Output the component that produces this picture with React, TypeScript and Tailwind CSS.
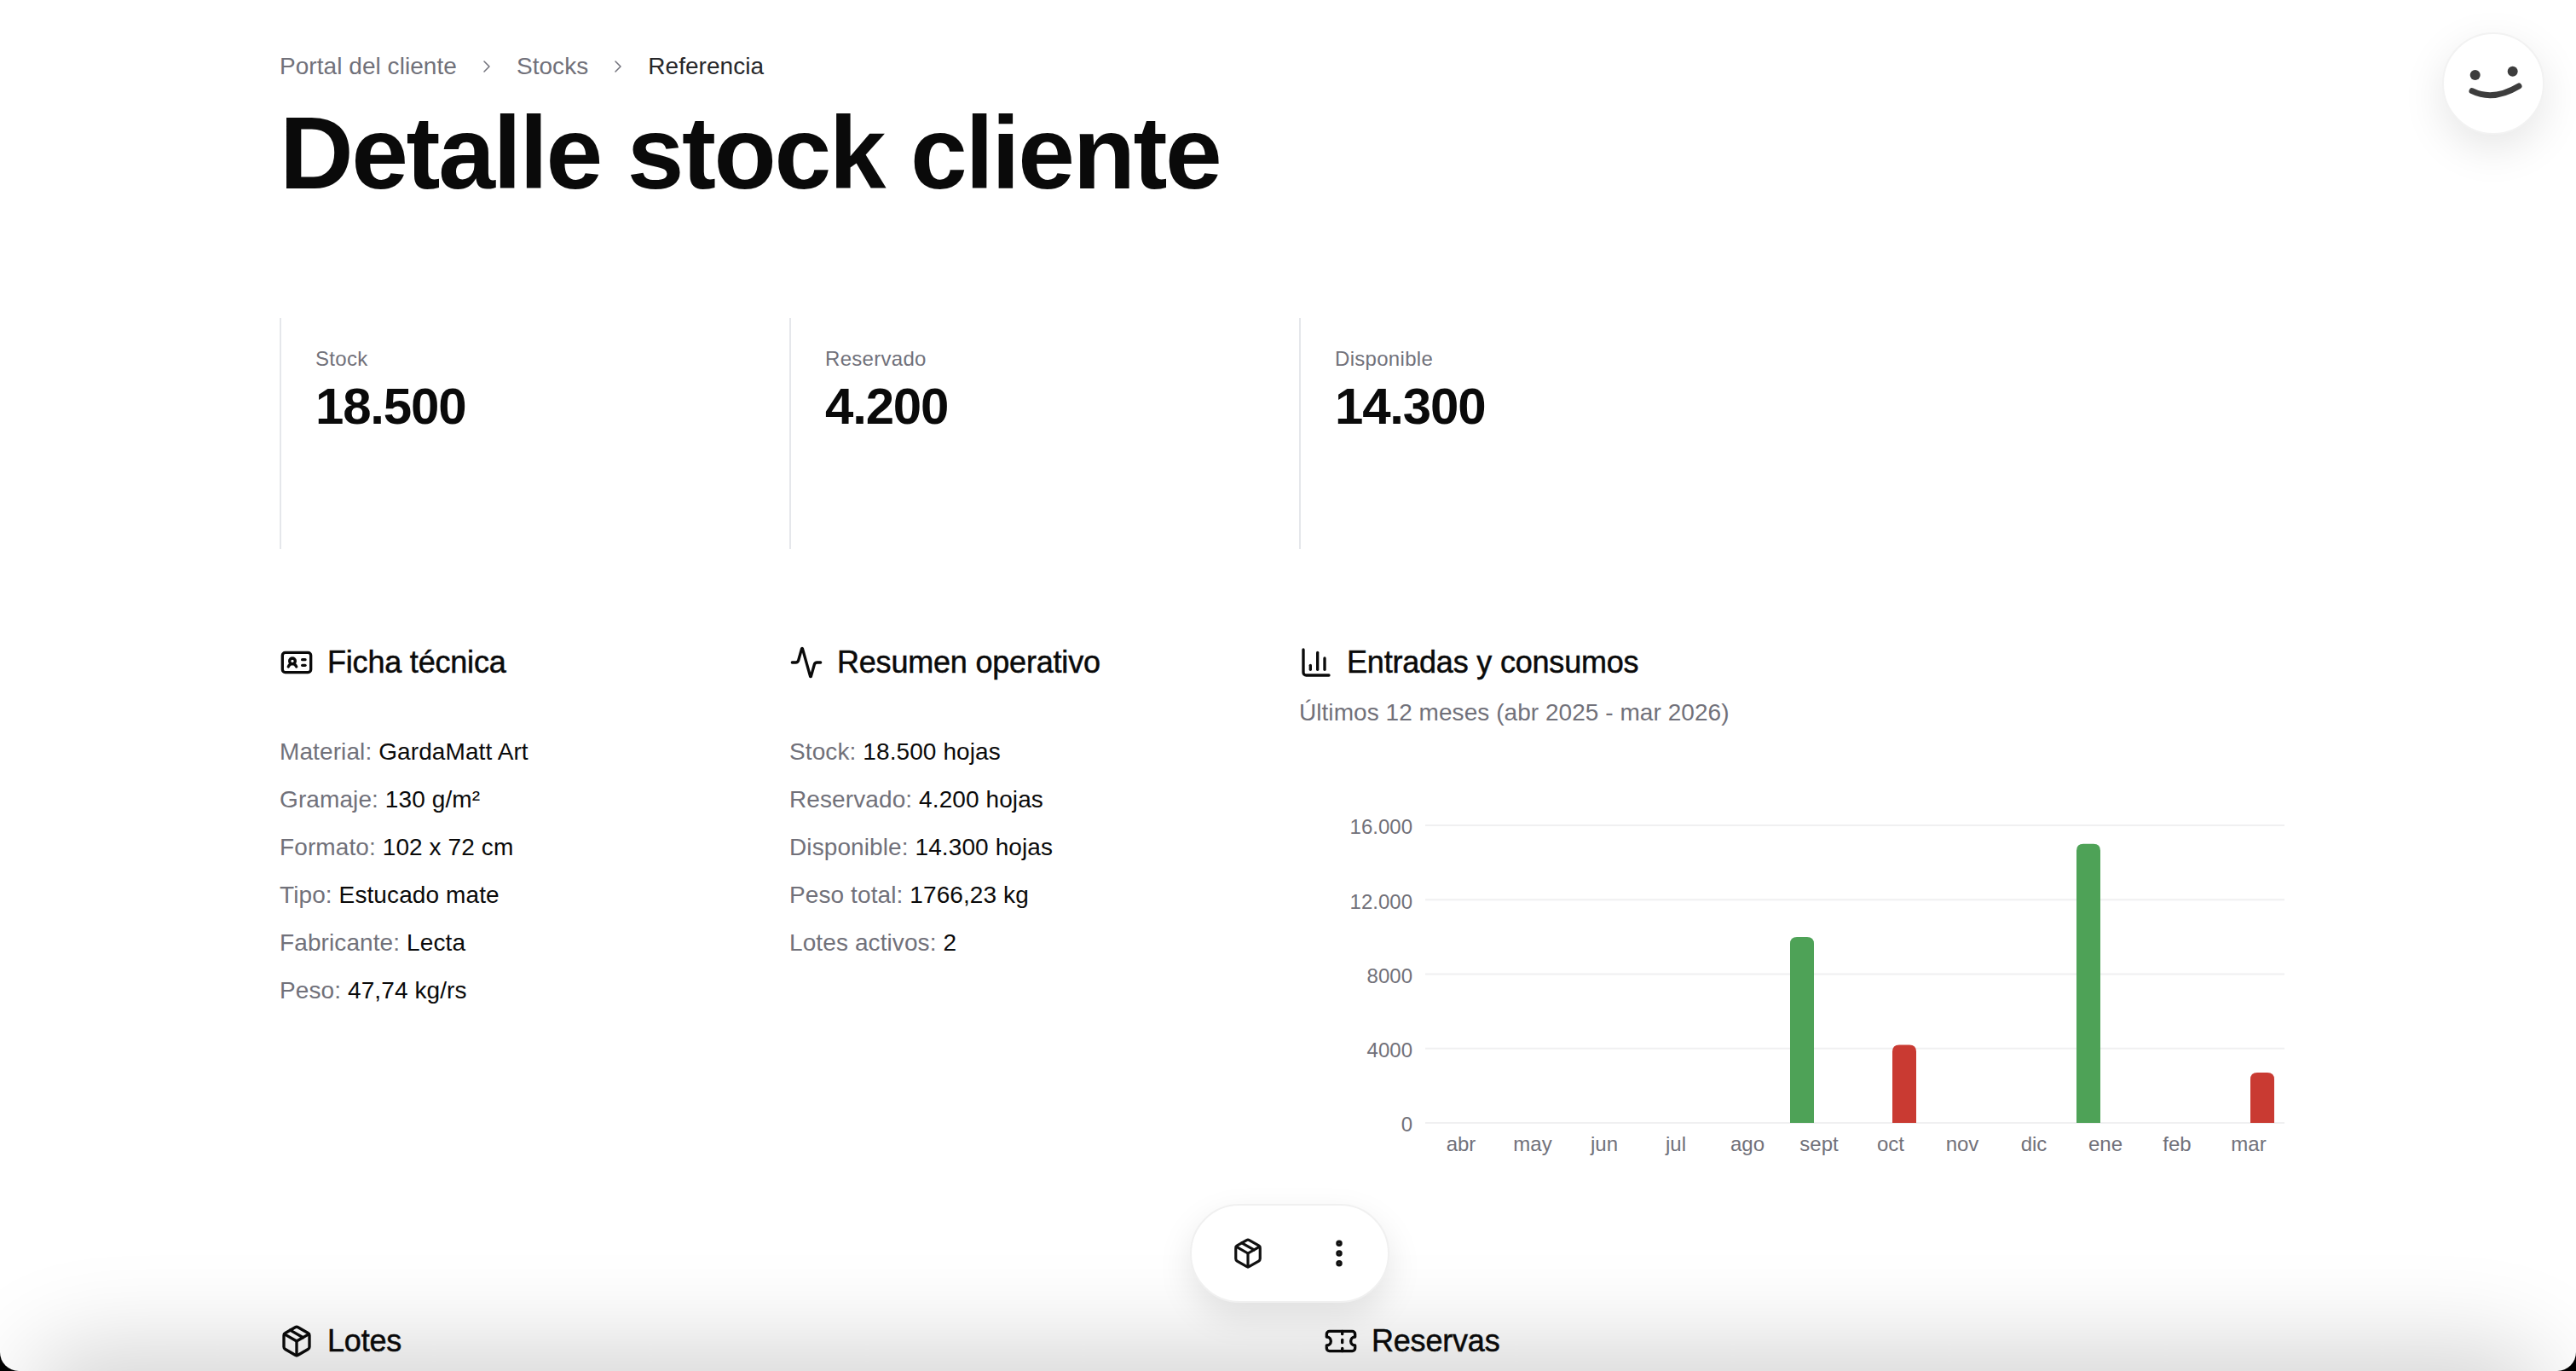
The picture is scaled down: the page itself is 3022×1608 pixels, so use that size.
import { Activity, ChartColumn, ChevronRight, EllipsisVertical, IdCard, Package, Ticket } from "lucide-react";

const months = ["abr", "may", "jun", "jul", "ago", "sept", "oct", "nov", "dic", "ene", "feb", "mar"];
const ticks = ["16.000", "12.000", "8000", "4000", "0"];
const entradas: Record<string, number> = { sept: 10000, ene: 15000 };
const consumos: Record<string, number> = { oct: 4200, mar: 2700 };

const ficha = [
  ["Material", "GardaMatt Art"],
  ["Gramaje", "130 g/m²"],
  ["Formato", "102 x 72 cm"],
  ["Tipo", "Estucado mate"],
  ["Fabricante", "Lecta"],
  ["Peso", "47,74 kg/rs"],
];
const resumen = [
  ["Stock", "18.500 hojas"],
  ["Reservado", "4.200 hojas"],
  ["Disponible", "14.300 hojas"],
  ["Peso total", "1766,23 kg"],
  ["Lotes activos", "2"],
];

function Stat({ label, value }: { label: string; value: string }) {
  return (
    <div className="h-[271px] border-l-2 border-[#e5e7eb] pl-10 pt-[32px]">
      <p className="text-[24px] leading-[32px] tracking-[0.3px] text-[#71717a]">{label}</p>
      <p className="mt-[8px] text-[60px] font-bold leading-[64px] tracking-[-1.2px] text-[#0a0a0a]">{value}</p>
    </div>
  );
}

function Rows({ rows }: { rows: string[][] }) {
  return (
    <div className="mt-[64px] flex flex-col gap-[16px] text-[28px] leading-[40px] tracking-[0.1px]">
      {rows.map(([k, v]) => (
        <p key={k} className="text-[#71717a]">
          {k}: <span className="text-[#0a0a0a]">{v}</span>
        </p>
      ))}
    </div>
  );
}

function Heading({ icon, children }: { icon: React.ReactNode; children: string }) {
  return (
    <div className="flex h-[42px] items-center gap-[16px] text-[36px] tracking-[-0.2px] text-[#0a0a0a] [-webkit-text-stroke:0.5px_#0a0a0a]">
      {icon}
      <span>{children}</span>
    </div>
  );
}

function barPath(x: number, top: number, w: number, bottom: number) {
  const r = 8;
  return `M${x} ${bottom}V${top + r}Q${x} ${top} ${x + r} ${top}H${x + w - r}Q${x + w} ${top} ${x + w} ${top + r}V${bottom}Z`;
}

function Chart() {
  const y0 = 381;
  const step = 87.25;
  const left = 148;
  const band = 84;
  return (
    <svg width="1156" height="430" viewBox="0 0 1156 430" className="mt-[80px]">
      {ticks.map((t, i) => (
        <g key={t}>
          <line x1={left} x2={1156} y1={y0 - (4 - i) * step} y2={y0 - (4 - i) * step} stroke="#f0f0f1" strokeWidth="2" />
          <text x={133} y={y0 - (4 - i) * step + 2} dy="0.35em" textAnchor="end" fontSize="24" fill="#71717a">
            {t}
          </text>
        </g>
      ))}
      {months.map((m, i) => {
        const c = left + band * (i + 0.5);
        const g = entradas[m];
        const r = consumos[m];
        return (
          <g key={m}>
            {g && <path d={barPath(c - 34, y0 - (g / 16000) * 349, 28, y0)} fill="#4ea257" />}
            {r && <path d={barPath(c + 2, y0 - (r / 16000) * 349, 28, y0)} fill="#c93a32" />}
            <text x={c} y={y0 + 25} dy="0.35em" textAnchor="middle" fontSize="24" fill="#71717a">
              {m}
            </text>
          </g>
        );
      })}
    </svg>
  );
}

export default function App() {
  return (
    <div className="relative h-[1608px] w-[3022px] overflow-hidden bg-white font-['Liberation_Sans',Arial,sans-serif]">
      <div className="pl-[328px] pt-[58px]">
        <nav className="flex h-[40px] items-center text-[28px] tracking-[0.05px] text-[#71717a]">
          <span>Portal del cliente</span>
          <ChevronRight className="mx-[23px] size-[24px]" strokeWidth={1.5} />
          <span>Stocks</span>
          <ChevronRight className="mx-[23px] size-[24px]" strokeWidth={1.5} />
          <span className="text-[#27272a]">Referencia</span>
        </nav>
        <h1 className="mt-[21px] text-[120px] font-bold leading-[120px] tracking-[-2.4px] text-[#0a0a0a]">
          Detalle stock cliente
        </h1>

        <div className="mt-[134px] grid w-[2352px] grid-cols-[598px_598px_1156px]">
          <Stat label="Stock" value="18.500" />
          <Stat label="Reservado" value="4.200" />
          <Stat label="Disponible" value="14.300" />
        </div>

        <div className="mt-[112px] grid w-[2352px] grid-cols-[598px_598px_1156px]">
          <div>
            <Heading icon={<IdCard className="size-[40px]" strokeWidth={2} />}>Ficha técnica</Heading>
            <Rows rows={ficha} />
          </div>
          <div>
            <Heading icon={<Activity className="size-[40px]" strokeWidth={2} />}>Resumen operativo</Heading>
            <Rows rows={resumen} />
          </div>
          <div>
            <Heading icon={<ChartColumn className="size-[40px]" strokeWidth={2} />}>Entradas y consumos</Heading>
            <p className="mt-[18px] text-[28px] leading-[40px] tracking-[0.05px] text-[#71717a]">Últimos 12 meses (abr 2025 - mar 2026)</p>
            <Chart />
          </div>
        </div>

        <div className="mt-[186px] grid w-[2352px] grid-cols-[1225px_1fr]">
          <Heading icon={<Package className="size-[40px]" strokeWidth={2} />}>Lotes</Heading>
          <Heading icon={<Ticket className="size-[40px]" strokeWidth={2} />}>Reservas</Heading>
        </div>
      </div>

      {/* window bottom shade + rounded corners */}
      <div className="pointer-events-none absolute inset-x-[60px] bottom-[-80px] h-[80px] rounded-full shadow-[0_0_110px_30px_rgba(0,0,0,0.17)]" />
      <div className="pointer-events-none absolute inset-0 rounded-b-[22px] shadow-[0_0_0_40px_#000]" />

      {/* floating toolbar */}
      <div className="absolute left-[1396px] top-[1412px] flex h-[116px] w-[234px] items-center justify-between rounded-full border-2 border-[#f0f0f0] bg-white pl-[47px] pr-[37px] shadow-[0_16px_40px_rgba(0,0,0,0.1)]">
        <Package className="size-[38px] text-[#111]" strokeWidth={2} />
        <EllipsisVertical className="size-[40px] text-[#111]" strokeWidth={2.5} />
      </div>

      {/* smiley */}
      <div className="absolute left-[2865px] top-[38px] flex size-[120px] items-center justify-center rounded-full border-2 border-[#f2f2f2] bg-white shadow-[0_16px_50px_rgba(0,0,0,0.1)]">
        <svg width="70" height="50" viewBox="0 0 70 50" fill="none">
          <circle cx="13.7" cy="15" r="6" fill="#3d3d3d" />
          <circle cx="57.7" cy="10.7" r="6" fill="#3d3d3d" />
          <path d="M10 33.7Q35 46 65 28" stroke="#3d3d3d" strokeWidth="7" strokeLinecap="round" />
        </svg>
      </div>
    </div>
  );
}
